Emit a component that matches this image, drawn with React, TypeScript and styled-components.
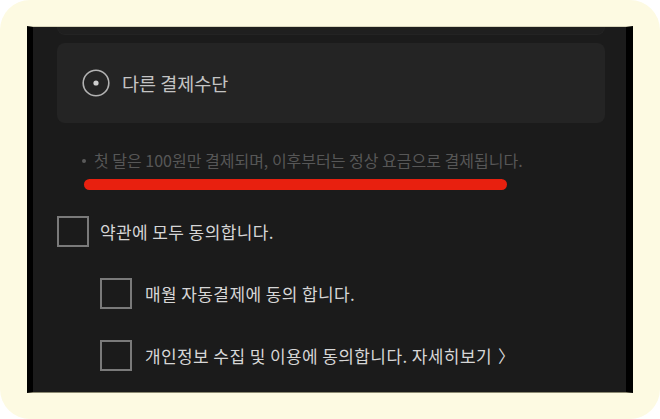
import React, { FC } from 'react';
import styled, { createGlobalStyle } from 'styled-components';

const GlobalStyle = createGlobalStyle`
  html, body {
    margin: 0;
    padding: 0;
    background: #ffffff;
  }
  * {
    box-sizing: border-box;
  }
`;

const Frame = styled.div`
  width: 660px;
  height: 419px;
  background: #fdfae2;
  border-radius: 30px;
  padding: 26px 27px 0 27px;
  font-family: 'Noto Sans CJK KR', 'Noto Sans', sans-serif;
`;

const Screen = styled.div`
  height: 367px;
  background: #1b1b1b;
  border-left: 6px solid #000;
  border-right: 7px solid #000;
  border-top: 1px solid #d8d5bb;
  border-bottom: 1px solid #8c8a72;
  padding: 0 21px 0 24px;
  overflow: hidden;
  display: flex;
  flex-direction: column;
`;

const PrevCard = styled.div`
  height: 8px;
  background: #1f1f1f;
  border-radius: 0 0 8px 8px;
  border: 1px solid #232323;
  border-top: none;
`;

const MethodCard = styled.div`
  margin-top: 8px;
  height: 80px;
  background: #242424;
  border-radius: 8px;
  display: flex;
  align-items: center;
  gap: 12px;
  padding: 0 0 0 25px;
`;

const MethodLabel = styled.span`
  font-size: 18.5px;
  color: #c4c4c4;
`;

const Note = styled.p`
  margin: 27px 0 0 0;
  padding-left: 25px;
  font-size: 16px;
  line-height: 21px;
  color: #575757;
  display: flex;
  align-items: center;
  gap: 8px;
  white-space: nowrap;
`;

const Bullet = styled.span`
  width: 4px;
  height: 4px;
  border-radius: 50%;
  background: #5a5a5a;
  flex-shrink: 0;
`;

const Highlight = styled.div`
  margin: 8px 0 0 27px;
  width: 423px;
  height: 11px;
  border-radius: 6px;
  background: #e8200f;
`;

const AgreeList = styled.div`
  margin-top: 26px;
  display: flex;
  flex-direction: column;
  gap: 31px;
`;

const AgreeRow = styled.label<{ $nested?: boolean }>`
  display: flex;
  align-items: center;
  gap: ${(p) => (p.$nested ? '13px' : '11px')};
  padding-left: ${(p) => (p.$nested ? '43px' : '0')};
  cursor: pointer;
`;

const Box = styled.span`
  width: 32px;
  height: 31px;
  border: 2px solid #7a7a7a;
  flex-shrink: 0;
`;

const AgreeText = styled.span`
  font-size: 17px;
  letter-spacing: 0.4px;
  color: #d6d6d6;
  white-space: nowrap;
`;

const Chevron = styled.span`
  margin-left: 6px;
`;

const RadioIcon: FC = () => (
  <svg width='28' height='28' viewBox='0 0 28 28'>
    <circle cx='14' cy='14' r='12.8' fill='none' stroke='#b3b3b3' strokeWidth='1.6' />
    <circle cx='14' cy='14' r='2.6' fill='#cfcfcf' />
  </svg>
);

const App: FC = () => {
  return (
    <>
      <GlobalStyle />
      <Frame>
        <Screen>
          <PrevCard />
          <MethodCard>
            <RadioIcon />
            <MethodLabel>다른 결제수단</MethodLabel>
          </MethodCard>
          <Note>
            <Bullet />
            <span>첫 달은 100원만 결제되며, 이후부터는 정상 요금으로 결제됩니다.</span>
          </Note>
          <Highlight />
          <AgreeList>
            <AgreeRow>
              <Box />
              <AgreeText>약관에 모두 동의합니다.</AgreeText>
            </AgreeRow>
            <AgreeRow $nested>
              <Box />
              <AgreeText>매월 자동결제에 동의 합니다.</AgreeText>
            </AgreeRow>
            <AgreeRow $nested>
              <Box />
              <AgreeText>
                개인정보 수집 및 이용에 동의합니다. 자세히보기<Chevron>〉</Chevron>
              </AgreeText>
            </AgreeRow>
          </AgreeList>
        </Screen>
      </Frame>
    </>
  );
};

export default App;
